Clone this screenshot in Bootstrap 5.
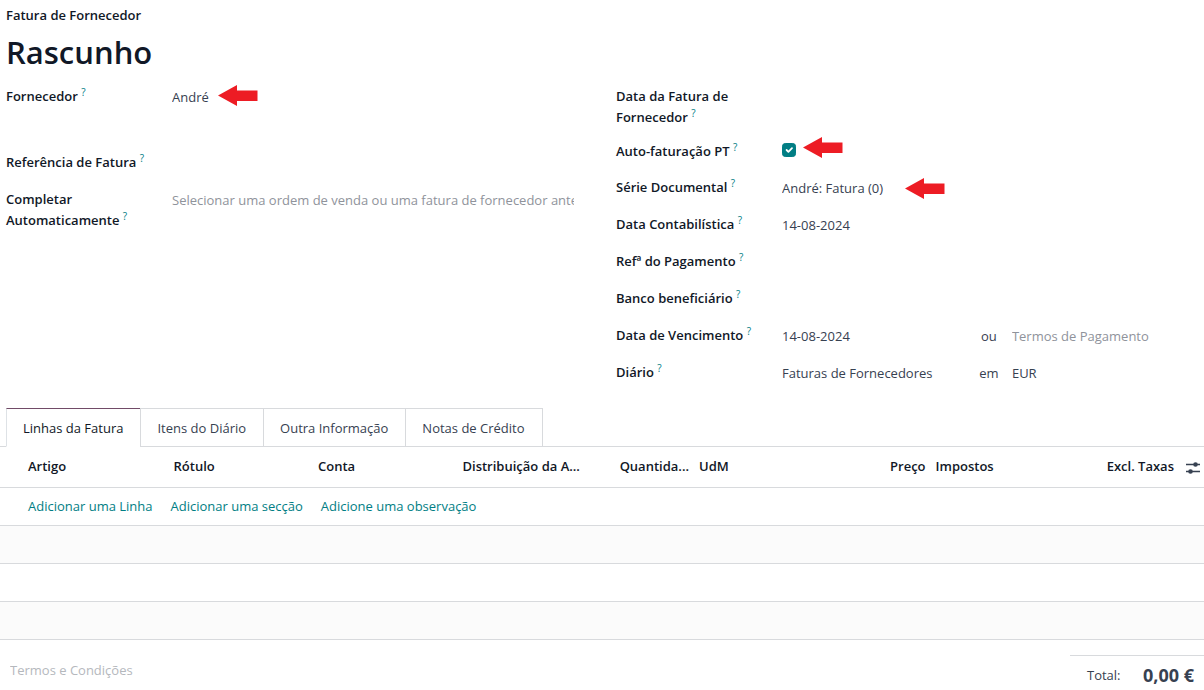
<!DOCTYPE html>
<html lang="pt">
<head>
<meta charset="utf-8">
<meta name="viewport" content="width=device-width, initial-scale=1">
<title>Fatura de Fornecedor</title>
<link href="https://cdn.jsdelivr.net/npm/bootstrap@5.3.0/dist/css/bootstrap.min.css" rel="stylesheet">
<style>
  :root { --ink: #111827; --text: #374151; --line: #d8dadd; --teal: #017e84; --plum: #714b67; }
  body { font-family: "Open Sans", "Noto Sans", sans-serif; font-size: 13px; line-height: 21px; color: var(--text); background: #fff; overflow-x: hidden; }
  .doc-head { padding: 5px 6px 0; color: var(--ink); }
  .doc-kind { font-weight: 600; }
  .doc-title { font-size: 31px; line-height: 42px; font-weight: 600; margin: 5px 0 13px; }
  .col-start { padding-left: 6px; padding-right: 28px; }
  .col-end { padding-left: 14px; padding-right: 4px; }
  .field { display: flex; min-height: 37px; }
  .field-party { min-height: 66px; }
  .field-date { min-height: 55px; }
  .field-tick { min-height: 36px; }
  .field > .caption { flex: 0 0 150px; margin-right: 16px; color: var(--ink); font-weight: 600; }
  .field sup { top: -5px; font-size: 10px; line-height: 0; font-weight: 400; color: var(--teal); }
  .value { flex: 1 1 0; min-width: 0; position: relative; padding-top: 1px; }
  .plain { display: block; width: 100%; height: 21px; border: 0; padding: 0; background: transparent; color: var(--text); line-height: 21px; }
  .plain::placeholder, .terms::placeholder { color: #8f939b; opacity: 1; }
  .plain:focus { outline: 0; border-bottom: 1px solid var(--teal); }
  .joiner { flex: 0 0 46px; text-align: center; }
  .joiner + .plain { flex: 0 0 45%; }
  .tick { margin: 1px 0 0; width: 14px; height: 14px; display: block; }
  .tick:checked { background-color: var(--teal); border-color: var(--teal); }
  .arrow { position: absolute; top: -1px; width: 40px; height: 21px; }
  .arrow-party { left: 46px; }
  .arrow-tick { left: 21px; top: -4px; }
  .arrow-series { left: 123px; top: 1px; }
  .book { padding-left: 6px; margin-top: 9px; border-color: var(--line); }
  .book .nav-link { border-radius: 0; border: 1px solid var(--line); margin-right: -1px; padding: 9px 17px 7px 16px; line-height: 21px; color: var(--text); height: 39px; }
  .book .nav-link.active { color: var(--ink); border-top-color: var(--plum); border-bottom-color: #fff; }
  .lines { table-layout: fixed; border-color: var(--line); margin: 0; --bs-table-color: var(--text); }
  .lines th, .lines td { padding: 8px 5px; height: 38px; white-space: nowrap; }
  .lines th { font-weight: 600; color: var(--ink); height: 40px; padding: 8px 5px 10px; }
  .lines tr > :first-child { padding-left: 28px; }
  .lines tbody tr:nth-child(even) > td { background: #fbfbfb; }
  .lines a { color: var(--teal); text-decoration: none; margin-right: 18px; }
  .lines .icon-cell { padding: 12px 0 0 7px; }
  .w-wide { width: 13%; } .w-first { width: 14%; } .w-std { width: 12%; }
  .w-qty { width: 80px; } .w-sum { width: 104px; } .w-icon { width: 25px; }
  .gear { border: 0; background: none; padding: 0; display: block; color: var(--text); }
  .terms { border: 0; padding: 0 0 0 10px; margin-top: 20px; height: 21px; width: 50%; }
  .terms::placeholder { color: #b5b8bd; }
  .totals { margin-top: 15px; min-width: 134px; padding: 9px 10px 4px 17px; border-top: 1px solid var(--line); }
  .amount { font-size: 18px; font-weight: 700; }
</style>
</head>
<body>
<header class="doc-head">
  <div class="doc-kind">Fatura de Fornecedor</div>
  <h1 class="doc-title">Rascunho</h1>
</header>

<form class="row g-0">
  <div class="col-6 col-start">
    <div class="field field-party">
      <label class="caption" for="party">Fornecedor <sup>?</sup></label>
      <div class="value"><input class="plain" id="party" value="André">
        <svg class="arrow arrow-party" viewBox="0 0 40 21" aria-hidden="true"><path d="M0 10.500 19 0V5.500H39.500V16H19V21Z" fill="#ed1c24"/></svg></div>
    </div>
    <div class="field">
      <label class="caption" for="ref">Referência de Fatura <sup>?</sup></label>
      <div class="value"><input class="plain" id="ref"></div>
    </div>
    <div class="field">
      <label class="caption" for="auto">Completar Automaticamente <sup>?</sup></label>
      <div class="value"><input class="plain" id="auto" placeholder="Selecionar uma ordem de venda ou uma fatura de fornecedor anterior"></div>
    </div>
  </div>
  <div class="col-6 col-end">
    <div class="field field-date">
      <label class="caption" for="bill-date">Data da Fatura de Fornecedor <sup>?</sup></label>
      <div class="value"><input class="plain" id="bill-date"></div>
    </div>
    <div class="field field-tick">
      <label class="caption" for="self">Auto-faturação PT <sup>?</sup></label>
      <div class="value"><input type="checkbox" class="form-check-input tick" id="self" checked>
        <svg class="arrow arrow-tick" viewBox="0 0 40 21" aria-hidden="true"><path d="M0 10.500 19 0V5.500H39.500V16H19V21Z" fill="#ed1c24"/></svg></div>
    </div>
    <div class="field">
      <label class="caption" for="series">Série Documental <sup>?</sup></label>
      <div class="value"><input class="plain" id="series" value="André: Fatura (0)">
        <svg class="arrow arrow-series" viewBox="0 0 40 21" aria-hidden="true"><path d="M0 10.500 19 0V5.500H39.500V16H19V21Z" fill="#ed1c24"/></svg></div>
    </div>
    <div class="field">
      <label class="caption" for="acc-date">Data Contabilística <sup>?</sup></label>
      <div class="value"><input class="plain" id="acc-date" value="14-08-2024"></div>
    </div>
    <div class="field">
      <label class="caption" for="pay-ref">Refª do Pagamento <sup>?</sup></label>
      <div class="value"><input class="plain" id="pay-ref"></div>
    </div>
    <div class="field">
      <label class="caption" for="bank">Banco beneficiário <sup>?</sup></label>
      <div class="value"><input class="plain" id="bank"></div>
    </div>
    <div class="field">
      <label class="caption" for="due">Data de Vencimento <sup>?</sup></label>
      <div class="value d-flex"><input class="plain" id="due" value="14-08-2024"><label class="joiner" for="pay-terms">ou</label><input class="plain" id="pay-terms" placeholder="Termos de Pagamento"></div>
    </div>
    <div class="field">
      <label class="caption" for="journal">Diário <sup>?</sup></label>
      <div class="value d-flex"><input class="plain" id="journal" value="Faturas de Fornecedores"><label class="joiner" for="currency">em</label><input class="plain" id="currency" value="EUR"></div>
    </div>
  </div>
</form>

<ul class="nav nav-tabs book" role="tablist">
  <li class="nav-item"><button class="nav-link active" type="button" role="tab">Linhas da Fatura</button></li>
  <li class="nav-item"><button class="nav-link" type="button" role="tab">Itens do Diário</button></li>
  <li class="nav-item"><button class="nav-link" type="button" role="tab">Outra Informação</button></li>
  <li class="nav-item"><button class="nav-link" type="button" role="tab">Notas de Crédito</button></li>
</ul>

<table class="table lines">
  <thead>
    <tr>
      <th class="w-first">Artigo</th>
      <th class="w-std">Rótulo</th>
      <th class="w-std">Conta</th>
      <th class="w-wide">Distribuição da A...</th>
      <th class="w-qty text-end">Quantida...</th>
      <th class="w-std">UdM</th>
      <th class="text-end">Preço</th>
      <th class="w-std">Impostos</th>
      <th class="w-sum text-end">Excl. Taxas</th>
      <th class="w-icon icon-cell align-top"><button class="gear" type="button" aria-label="Colunas"><svg class="d-block" width="15" height="15" viewBox="0 0 15 15"><path d="M0 5.500H14M0 12.500H14" stroke="currentColor" stroke-width="1.300"/><circle cx="9.500" cy="5.500" r="2.300" fill="currentColor"/><circle cx="4.500" cy="12.500" r="2.300" fill="currentColor"/></svg></button></th>
    </tr>
  </thead>
  <tbody>
    <tr><td colspan="10"><a href="#">Adicionar uma Linha</a><a href="#">Adicionar uma secção</a><a href="#">Adicione uma observação</a></td></tr>
    <tr><td colspan="10"></td></tr>
    <tr><td colspan="10"></td></tr>
    <tr><td colspan="10"></td></tr>
  </tbody>
</table>

<footer class="d-flex justify-content-between align-items-start">
  <input class="terms" aria-label="Termos e Condições" placeholder="Termos e Condições">
  <div class="totals d-flex justify-content-between align-items-center"><span>Total:</span><span class="amount">0,00 €</span></div>
</footer>
<script src="https://cdn.jsdelivr.net/npm/bootstrap@5.3.0/dist/js/bootstrap.bundle.min.js"></script>
</body>
</html>
